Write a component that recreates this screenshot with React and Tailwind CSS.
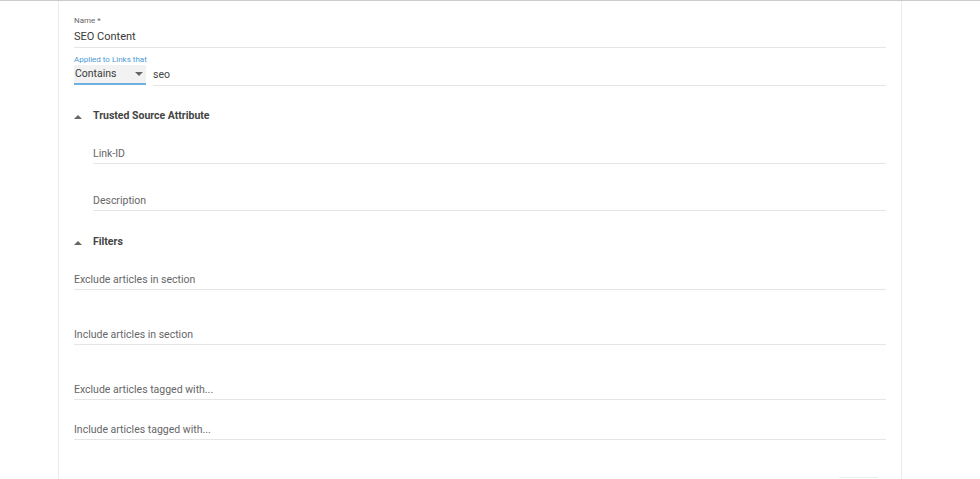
import React from "react";

function Caret() {
  return (
    <svg width="8" height="5" viewBox="0 0 8 5" className="shrink-0">
      <path d="M0 5 L4 1 L8 5 Z" fill="#666" />
    </svg>
  );
}

function Field({ text, indent, className = "" }) {
  return (
    <div className={`border-b border-[#e5e5e5] ${indent ? "ml-[19px]" : ""} ${className}`}>
      <div className="h-[20px] pt-[1px] text-[10.5px] leading-[20px] text-[#666]">{text}</div>
    </div>
  );
}

function Section({ title, className = "" }) {
  return (
    <div className={`flex items-center h-[16px] ${className}`}>
      <div className="w-[19px] flex items-center"><Caret /></div>
      <div className="text-[10.5px] font-bold text-[#444]">{title}</div>
    </div>
  );
}

export default function App() {
  return (
    <div className="w-[980px] h-[479px] overflow-hidden bg-white border-t border-[#cccccc] font-['Roboto',sans-serif]">
      <div className="ml-[58px] w-[844px] h-full border-x border-[#ececec] px-[15px]">
        <div className="pt-[15px]">
          <div className="text-[8px] leading-[10px] text-[#666]">Name *</div>
          <div className="border-b border-[#e5e5e5] h-[22px] text-[11px] leading-[22px] text-[#3a3a3a]">SEO Content</div>
        </div>
        <div className="mt-[7px]">
          <div className="text-[8px] leading-[10px] text-[#4a9ad6]">Applied to Links that</div>
          <div className="flex gap-[7px]">
            <div className="w-[72px] h-[20px] bg-[#f2f2f2] border-b-2 border-[#6fb0e0] flex items-center justify-between pl-[1px] pr-[3px]">
              <span className="text-[10.5px] text-[#3a3a3a]">Contains</span>
              <svg width="8" height="4" viewBox="0 0 8 4"><path d="M0 0 L8 0 L4 4 Z" fill="#666" /></svg>
            </div>
            <div className="flex-1 border-b border-[#e5e5e5] h-[21px] text-[10.5px] leading-[20px] text-[#444]">seo</div>
          </div>
        </div>
        <Section title="Trusted Source Attribute" className="mt-[22px]" />
        <Field text="Link-ID" indent className="mt-[19px]" />
        <Field text="Description" indent className="mt-[26px]" />
        <Section title="Filters" className="mt-[23px]" />
        <Field text="Exclude articles in section" className="mt-[19px]" />
        <Field text="Include articles in section" className="mt-[34px]" />
        <Field text="Exclude articles tagged with..." className="mt-[34px]" />
        <Field text="Include articles tagged with..." className="mt-[19px]" />
        <div className="flex justify-end mt-[37px] pr-[8px]">
          <div className="w-[39px] h-[4px] border-t border-[#eeeeee]" />
        </div>
      </div>
    </div>
  );
}
